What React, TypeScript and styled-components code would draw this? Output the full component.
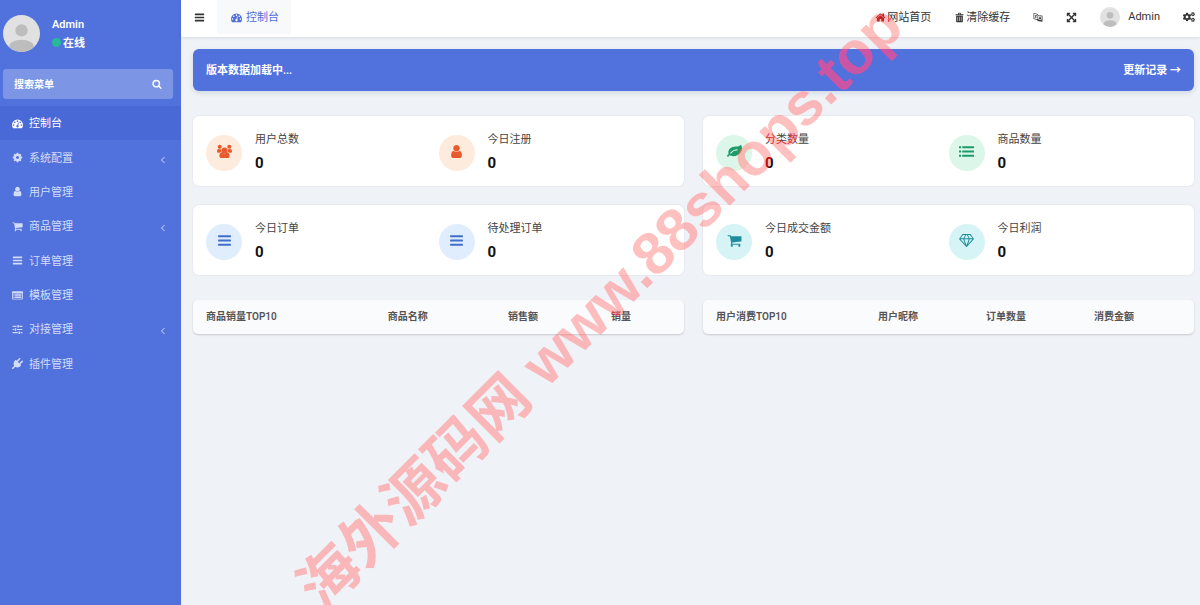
import React from 'react';
import styled, { createGlobalStyle } from 'styled-components';
import { FaCogs } from 'react-icons/fa';

const GlobalStyle = createGlobalStyle`
  *, *::before, *::after { box-sizing: border-box; }
  body {
    margin: 0;
    background: #eff3f7;
    color: #333;
    font: 11px/16px "Open Sans", "Noto Sans CJK SC", sans-serif;
    overflow-x: hidden;
  }
  button, input { font: inherit; color: inherit; }
  a { color: inherit; text-decoration: none; }
`;

const PATHS: Record<string, string> = {
  home: 'M1472 992v480q0 26-19 45t-45 19h-384v-384h-256v384h-384q-26 0-45-19t-19-45v-480q0-1 .5-3t.5-3l575-474 575 474q1 2 1 6zm223-69l-62 74q-8 9-21 11h-3q-13 0-21-7l-692-577-692 577q-12 8-24 7-13-2-21-11l-62-74q-8-10-7-23.5t11-21.5l719-599q32-26 76-26t76 26l244 204v-195q0-14 9-23t23-9h192q14 0 23 9t9 23v408l219 182q10 8 11 21.5t-7 23.5z',
  cog: 'M1152 896q0-106-75-181t-181-75-181 75-75 181 75 181 181 75 181-75 75-181zm512-109v222q0 12-8 23t-20 13l-185 28q-19 54-39 91 35 50 107 138 10 12 10 25t-9 23q-27 37-99 108t-94 71q-12 0-26-9l-138-108q-44 23-91 38-16 136-29 186-7 28-36 28h-222q-14 0-24.500-8.500t-11.500-21.500l-28-184q-49-16-90-37l-141 107q-10 9-25 9-14 0-25-11-126-114-165-168-7-10-7-23 0-12 8-23 15-21 51-66.500t54-70.500q-27-50-41-99l-183-27q-13-2-21-12.500t-8-23.500v-222q0-12 8-23t19-13l186-28q14-46 39-92-40-57-107-138-10-12-10-24 0-10 9-23 26-36 98.500-107.500t94.500-71.500q13 0 26 10l138 107q44-23 91-38 16-136 29-186 7-28 36-28h222q14 0 24.500 8.500t11.500 21.500l28 184q49 16 90 37l142-107q9-9 24-9 13 0 25 10 129 119 165 170 7 8 7 22 0 12-8 23-15 21-51 66.500t-54 70.500q26 50 41 98l183 28q13 2 21 12.500t8 23.500z',
  leaf: 'M1280 704q0-26-19-45t-45-19q-172 0-318 49.500t-259.500 134-235.500 219.500q-19 21-19 45 0 26 19 45t45 19q24 0 45-19 27-24 74-71t67-66q137-124 268.500-176t313.500-52q26 0 45-19t19-45zm512-198q0 95-20 193-46 224-184.500 383t-357.500 268q-214 108-438 108-148 0-286-47-15-5-88-42t-96-37q-16 0-39.500 32t-45 70-52.500 70-60 32q-43 0-63.500-17.500t-45.500-59.500q-2-4-6-11t-5.500-10-3-9.500-1.500-13.500q0-35 31-73.500t68-65.500 68-56 31-48q0-4-14-38t-16-44q-9-51-9-104 0-115 43.500-220t119-184.500 170.500-139 204-95.500q55-18 145-25.500t179.500-9 178.500-6 163.500-24 113.500-56.500l29.500-29.500 29.500-28 27-20 36.500-16 43.500-4.500q39 0 70.500 46t47.500 112 24 124 8 96z',
  cart: 'M704 1536q0 52-38 90t-90 38-90-38-38-90 38-90 90-38 90 38 38 90zm896 0q0 52-38 90t-90 38-90-38-38-90 38-90 90-38 90 38 38 90zm128-1088v512q0 24-16.500 42.500t-40.500 21.500l-1044 122q13 60 13 70 0 16-24 64h920q26 0 45 19t19 45-19 45-45 19h-1024q-26 0-45-19t-19-45q0-11 8-31.500t16-36 21.500-40 15.500-29.500l-177-823h-204q-26 0-45-19t-19-45 19-45 45-19h256q16 0 28.500 6.500t19.500 15.500 13 24.500 8 26 5.500 29.500 4.500 26h1201q26 0 45 19t19 45z',
  gauge: 'M384 1152q0-53-37.500-90.500t-90.500-37.500-90.500 37.500-37.500 90.500 37.500 90.500 90.500 37.500 90.500-37.500 37.500-90.500zm192-448q0-53-37.500-90.500t-90.500-37.500-90.500 37.500-37.500 90.500 37.500 90.500 90.500 37.500 90.500-37.500 37.500-90.500zm428 481l101-382q6-26-7.500-48.500t-38.500-29.500-48 6.500-30 39.500l-101 382q-60 5-107 43.500t-63 98.500q-20 77 20 146t117 89 146-20 89-117q16-60-6-117t-72-91zm660-33q0-53-37.500-90.500t-90.500-37.500-90.500 37.500-37.500 90.500 37.500 90.500 90.500 37.500 90.500-37.500 37.500-90.500zm-640-640q0-53-37.500-90.500t-90.500-37.500-90.500 37.500-37.500 90.500 37.500 90.500 90.500 37.500 90.500-37.500 37.500-90.500zm448 192q0-53-37.500-90.500t-90.500-37.500-90.500 37.500-37.500 90.500 37.500 90.500 90.500 37.500 90.500-37.500 37.500-90.500zm320 448q0 261-141 483-19 29-54 29h-1402q-35 0-54-29-141-221-141-483 0-182 71-348t191-286 286-191 348-71 348 71 286 191 191 286 71 348z',
  user: 'M1536 1399q0 109-62.500 187t-150.500 78h-854q-88 0-150.500-78t-62.500-187q0-85 8.500-160.500t31.500-152 58.500-131 94-89 134.500-34.500q131 128 313 128t313-128q76 0 134.500 34.500t94 89 58.500 131 31.500 152 8.500 160.500zm-256-887q0 159-112.500 271.500t-271.500 112.500-271.500-112.500-112.500-271.500 112.500-271.500 271.500-112.500 271.500 112.500 112.500 271.500z',
  search: 'M1216 832q0-185-131.500-316.500t-316.500-131.500-316.500 131.500-131.500 316.500 131.500 316.500 316.500 131.500 316.500-131.500 131.500-316.500zm512 832q0 52-38 90t-90 38q-54 0-90-38l-343-342q-179 124-399 124-143 0-273.500-55.500t-225-150-150-225-55.500-273.500 55.500-273.500 150-225 225-150 273.500-55.500 273.500 55.500 225 150 150 225 55.500 273.500q0 220-124 399l343 343q37 37 37 90z',
  expand: 'M1411 541l-355 355 355 355 144-144q29-31 70-14 39 17 39 59v448q0 26-19 45t-45 19h-448q-42 0-59-40-17-39 14-69l144-144-355-355-355 355 144 144q31 30 14 69-17 40-59 40h-448q-26 0-45-19t-19-45v-448q0-42 40-59 39-17 69 14l144 144 355-355-355-355-144 144q-19 19-45 19-12 0-24-5-40-17-40-59v-448q0-26 19-45t45-19h448q42 0 59 40 17 39-14 69l-144 144 355 355 355-355-144-144q-31-30-14-69 17-40 59-40h448q26 0 45 19t19 45v448q0 42-39 59-13 5-25 5-26 0-45-19z',
  bars: 'M192 256h1408q64 0 64 64v128q0 64-64 64h-1408q-64 0-64-64v-128q0-64 64-64zm0 512h1408q64 0 64 64v128q0 64-64 64h-1408q-64 0-64-64v-128q0-64 64-64zm0 512h1408q64 0 64 64v128q0 64-64 64h-1408q-64 0-64-64v-128q0-64 64-64z',
  list: 'M32 256h192q32 0 32 32v192q0 32-32 32h-192q-32 0-32-32v-192q0-32 32-32zm384 0h1344q32 0 32 32v192q0 32-32 32h-1344q-32 0-32-32v-192q0-32 32-32zm-384 512h192q32 0 32 32v192q0 32-32 32h-192q-32 0-32-32v-192q0-32 32-32zm384 0h1344q32 0 32 32v192q0 32-32 32h-1344q-32 0-32-32v-192q0-32 32-32zm-384 512h192q32 0 32 32v192q0 32-32 32h-192q-32 0-32-32v-192q0-32 32-32zm384 0h1344q32 0 32 32v192q0 32-32 32h-1344q-32 0-32-32v-192q0-32 32-32z',
  users: 'M896 420a350 350 0 1 1 0 700a350 350 0 1 1 0-700zM570 1000q140 170 326 170t326-170q280 20 280 490 0 174-180 174h-852q-180 0-180-174 0-470 280-490zM330 100a240 240 0 1 1 0 480a240 240 0 1 1 0-480zM1462 100a240 240 0 1 1 0 480a240 240 0 1 1 0-480zM140 560q190 100 370 40-50 180 0 330-120 20-190 124h-190q-130 0-130-124 0-280 140-370zM1652 560q-190 100-370 40 50 180 0 330 120 20 190 124h190q130 0 130-124 0-280-140-370z',
  sliders: 'M100 270h640v200h-640zM1200 270h492v200h-492zM880 160h240v420h-240zM100 796h220v200h-220zM780 796h912v200h-912zM440 686h240v420h-240zM100 1322h840v200h-840zM1400 1322h292v200h-292zM1060 1212h240v420h-240z',
  panel: 'M120 200h1552q120 0 120 120v1120q0 120-120 120h-1552q-120 0-120-120v-1120q0-120 120-120zM128 520v900h1536v-900zM230 600h200v180h-200zM510 600h1050v180h-1050zM230 870h200v180h-200zM510 870h1050v180h-1050zM230 1140h200v180h-200zM510 1140h1050v180h-1050z',
  plug: 'M1755 453q37 38 37 90.500t-37 90.500l-401 400 150 150-160 160q-163 163-389.500 186.500t-411.500-100.500l-362 362h-181v-181l362-362q-124-185-100.500-411.500t186.500-389.500l160-160 150 150 400-401q38-37 91-37t90 37 37 90.500-37 90.500l-400 401 234 234 401-400q38-37 91-37t90 37z',
  trash: 'M256 384h1280v160h-1280zM660 384v-160q0-96 96-96h280q96 0 96 96v160h-128v-128h-216v128zM352 600h1088v950q0 114-110 114h-868q-110 0-110-114zM580 760v720h90v-720zM850 760v720h90v-720zM1120 760v720h90v-720z',
  language: 'M100 160l800 200v160l792 130v1100l-900-130v-200l-692-160zM210 300v850l600 140v-830zM930 640v760l630 90v-740zM1180 800h150l200 600h-140l-40-130h-190l-40 130h-130zM1250 950l-60 210h120zM300 520l400 80v110l-90-20q-20 130-80 210l120 90-50 90-140-100-120 60-40-90 90-60-70-120 90-30 50 80q30-60 40-140l-200-50z',
  diamond: 'M420 128h952l420 576-896 1000-896-1000zM480 240l-300 400h350l200-400zM850 240l-210 400h512l-210-400zM1060 240l200 400h350l-300-400zM190 760l520 570-200-570zM640 760l256 720 256-720zM1280 760l-200 570 520-570z',
};

const Glyph = styled.svg<{ $size: number }>`
  width: ${(p) => p.$size}px;
  height: ${(p) => p.$size}px;
  flex: none;
  fill: currentColor;
  fill-rule: evenodd;
`;

const Icon = ({ name, size = 11 }: { name: string; size?: number }) => (
  <Glyph $size={size} viewBox="0 0 1792 1792" aria-hidden="true">
    <path d={PATHS[name]} />
  </Glyph>
);

const Picture = styled.svg<{ $size: number }>`
  width: ${(p) => p.$size}px;
  height: ${(p) => p.$size}px;
  flex: none;
  border-radius: 50%;
`;

const Avatar = ({ size }: { size: number }) => (
  <Picture $size={size} viewBox="0 0 36 36" aria-hidden="true">
    <rect width="36" height="36" fill="#e1e1e1" />
    <circle cx="18" cy="15" r="6" fill="#bdbdbd" />
    <ellipse cx="18" cy="31" rx="12" ry="7" fill="#bdbdbd" />
  </Picture>
);

const Shell = styled.div`
  display: flex;
  min-height: 100vh;
`;

const Sidebar = styled.aside`
  flex: 0 0 181px;
  min-width: 0;
  background: #5171dc;
  color: #fff;
`;

const Profile = styled.div`
  display: flex;
  align-items: center;
  gap: 12px;
  padding: 15px 3px 17px;
  font-weight: 600;
  line-height: 18px;
`;

const UserName = styled.div`
  font-family: Roboto, sans-serif;
`;

const Status = styled.div`
  display: flex;
  align-items: center;
  gap: 2px;
`;

const Dot = styled.span`
  width: 9px;
  height: 9px;
  border-radius: 50%;
  background: #27b99a;
`;

const Search = styled.form`
  display: flex;
  align-items: center;
  height: 30px;
  margin: 0 8px 7px 3px;
  border-radius: 3px;
  background: #7d95e5;
`;

const SearchInput = styled.input`
  flex: 1;
  width: 100%;
  min-width: 0;
  padding: 0 11px;
  border: 0;
  outline: 0;
  background: none;
  font-size: 10px;
  font-weight: 600;
  &::placeholder { color: #fff; opacity: 1; }
`;

const IconButton = styled.button`
  display: flex;
  align-items: center;
  justify-content: center;
  padding: 0;
  border: 0;
  background: none;
`;

const SearchButton = styled(IconButton)`
  width: 32px;
  height: 30px;
`;

const Menu = styled.nav`
  display: grid;
  grid-auto-rows: 1fr;
  height: 275px;
`;

const MenuLink = styled.a<{ $active?: boolean }>`
  display: grid;
  grid-template-columns: 11px 1fr 6px;
  align-items: center;
  gap: 6px;
  padding: 0 15px 0 12px;
  color: ${(p) => (p.$active ? '#fff' : '#d3dcf8')};
  background: ${(p) => (p.$active ? '#4969d6' : 'none')};
`;

const Chevron = styled.svg`
  width: 6px;
  height: 8px;
  margin-top: 4px;
  fill: none;
  stroke: currentColor;
`;

const Main = styled.div`
  flex: 1;
  min-width: 0;
`;

const Topbar = styled.header`
  display: flex;
  align-items: center;
  height: 37px;
  padding: 0 5px 3px 0;
  background: #fff;
  box-shadow: 0 1px 3px rgba(0, 21, 41, 0.1);
`;

const Toggle = styled(IconButton)`
  width: 36px;
  height: 32px;
`;

const Tab = styled.a`
  display: flex;
  align-items: center;
  gap: 4px;
  height: 34px;
  padding: 0 12px 0 14px;
  background: #f8f9fb;
  color: #4e6fd6;
`;

const Tools = styled.nav`
  display: flex;
  align-items: center;
  gap: 23px;
  margin-left: auto;
`;

const ToolLink = styled.a<{ $gap?: number }>`
  display: flex;
  align-items: center;
  gap: ${(p) => p.$gap ?? 1}px;
`;

const Content = styled.main`
  padding: 12px 6px 12px 12px;
`;

const Banner = styled.section`
  display: flex;
  align-items: center;
  justify-content: space-between;
  height: 42px;
  padding: 0 13px;
  border-radius: 6px;
  background: #5171dc;
  color: #fff;
  font-weight: 600;
  box-shadow: 0 2px 5px rgba(40, 60, 120, 0.15);
`;

const Columns = styled.div`
  display: grid;
  grid-template-columns: 1fr 1fr;
  gap: 19px;
  margin-top: 25px;
`;

const Card = styled.section`
  display: grid;
  grid-template-columns: 1fr 1fr;
  height: 70px;
  padding: 12px 13px;
  border-radius: 6px;
  background: #fff;
  box-shadow: 0 0 2px rgba(0, 0, 0, 0.12);
`;

const Stat = styled.div`
  display: flex;
  align-items: center;
  gap: 13px;
`;

const Badge = styled.span<{ $bg: string; $fg: string }>`
  display: flex;
  align-items: center;
  justify-content: center;
  width: 36px;
  height: 36px;
  padding-bottom: 3px;
  border-radius: 50%;
  background: ${(p) => p.$bg};
  color: ${(p) => p.$fg};
`;

const StatText = styled.div`
  padding-top: 1px;
`;

const Label = styled.div`
  line-height: 20px;
  color: #444;
`;

const Value = styled.div`
  font-family: Roboto, sans-serif;
  font-size: 15px;
  font-weight: 700;
  line-height: 28px;
  color: #111;
`;

const Table = styled.table`
  width: 100%;
  border-collapse: collapse;
  table-layout: fixed;
  border-radius: 5px;
  background: #fafbfd;
  box-shadow: 0 1px 2px rgba(0, 0, 0, 0.18);
`;

const HeadCell = styled.th<{ $width: string }>`
  width: ${(p) => p.$width};
  height: 34px;
  padding: 0 0 1px 13px;
  text-align: left;
  font-family: Roboto, "Noto Sans CJK SC", sans-serif;
  font-size: 10px;
  font-weight: 600;
  color: #555;
`;

const WatermarkLayer = styled.div`
  position: fixed;
  inset: 8px 0 0;
  display: flex;
  align-items: center;
  justify-content: center;
  pointer-events: none;
  mix-blend-mode: hard-light;
`;

const Watermark = styled.div`
  flex: none;
  transform: rotate(-45deg);
  white-space: nowrap;
  color: rgb(217, 96, 96);
  font: 700 60px/60px "Liberation Sans", "Noto Sans CJK SC", sans-serif;
`;

const MENU = [
  { icon: 'gauge', text: '控制台', active: true },
  { icon: 'cog', text: '系统配置', sub: true },
  { icon: 'user', text: '用户管理' },
  { icon: 'cart', text: '商品管理', sub: true },
  { icon: 'bars', text: '订单管理' },
  { icon: 'panel', text: '模板管理' },
  { icon: 'sliders', text: '对接管理', sub: true },
  { icon: 'plug', text: '插件管理' },
];

const CARDS = [
  { bg: '#fdebdd', fg: '#e8592b', items: [['users', '用户总数'], ['user', '今日注册']] },
  { bg: '#dcf6ea', fg: '#1d9b68', items: [['leaf', '分类数量'], ['list', '商品数量']] },
  { bg: '#e0edfd', fg: '#3f6fc9', items: [['bars', '今日订单'], ['bars', '待处理订单']] },
  { bg: '#d6f4f5', fg: '#1f8d9c', items: [['cart', '今日成交金额'], ['diamond', '今日利润']] },
];

const TABLES = [
  [['商品销量TOP10', '37%'], ['商品名称', '24.5%'], ['销售额', '21%'], ['销量', '17.5%']],
  [['用户消费TOP10', '33%'], ['用户昵称', '22%'], ['订单数量', '22%'], ['消费金额', '23%']],
];

export default function App() {
  return (
    <>
      <GlobalStyle />
      <Shell>
        <Sidebar>
          <Profile>
            <Avatar size={37} />
            <div>
              <UserName>Admin</UserName>
              <Status><Dot />在线</Status>
            </div>
          </Profile>
          <Search>
            <SearchInput aria-label="搜索菜单" placeholder="搜索菜单" />
            <SearchButton type="button" aria-label="搜索"><Icon name="search" size={10} /></SearchButton>
          </Search>
          <Menu>
            {MENU.map((m) => (
              <MenuLink key={m.text} href="#" $active={m.active}>
                <Icon name={m.icon} />
                {m.text}
                {m.sub && <Chevron viewBox="0 0 6 8" aria-hidden="true"><path d="M4.500 1L1.500 4l3 3" /></Chevron>}
              </MenuLink>
            ))}
          </Menu>
        </Sidebar>
        <Main>
          <Topbar>
            <Toggle aria-label="菜单"><Icon name="bars" /></Toggle>
            <Tab href="#"><Icon name="gauge" />控制台</Tab>
            <Tools>
              <ToolLink href="#"><Icon name="home" />网站首页</ToolLink>
              <ToolLink href="#"><Icon name="trash" />清除缓存</ToolLink>
              <IconButton aria-label="语言"><Icon name="language" size={10} /></IconButton>
              <IconButton aria-label="全屏"><Icon name="expand" /></IconButton>
              <ToolLink href="#" $gap={8}><Avatar size={20} /><UserName>Admin</UserName></ToolLink>
              <IconButton aria-label="设置"><FaCogs size={12} /></IconButton>
            </Tools>
          </Topbar>
          <Content>
            <Banner>
              <span>版本数据加载中...</span>
              <a href="#">更新记录 →</a>
            </Banner>
            <Columns>
              {CARDS.map((c) => (
                <Card key={c.bg}>
                  {c.items.map(([icon, label]) => (
                    <Stat key={label}>
                      <Badge $bg={c.bg} $fg={c.fg}><Icon name={icon} size={15} /></Badge>
                      <StatText>
                        <Label>{label}</Label>
                        <Value>0</Value>
                      </StatText>
                    </Stat>
                  ))}
                </Card>
              ))}
            </Columns>
            <Columns>
              {TABLES.map((t) => (
                <Table key={t[0][0]}>
                  <thead>
                    <tr>
                      {t.map(([text, width]) => (
                        <HeadCell key={text} scope="col" $width={width}>{text}</HeadCell>
                      ))}
                    </tr>
                  </thead>
                </Table>
              ))}
            </Columns>
          </Content>
        </Main>
      </Shell>
      <WatermarkLayer>
        <Watermark>海外源码网 www.88shops.top</Watermark>
      </WatermarkLayer>
    </>
  );
}
